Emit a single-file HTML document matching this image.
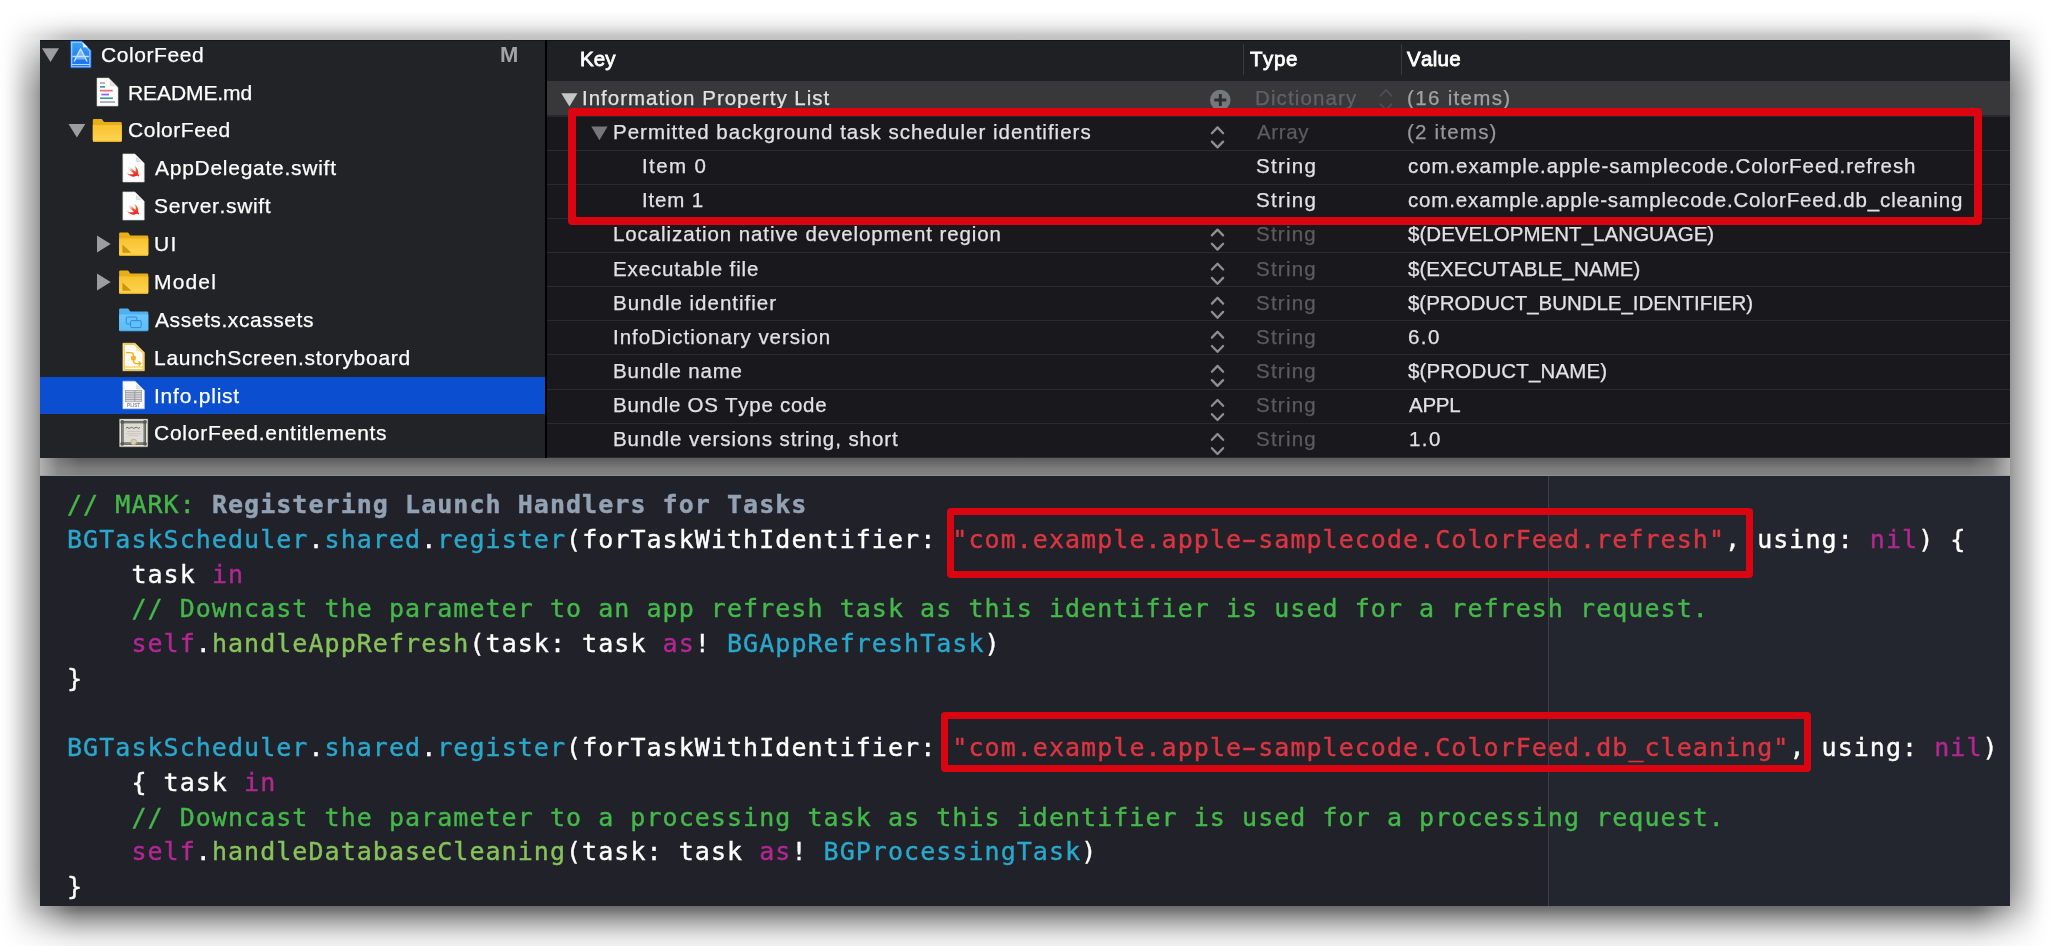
<!DOCTYPE html>
<html><head><meta charset="utf-8"><title>ColorFeed Info.plist</title>
<style>
html,body{margin:0;padding:0;background:#fff;}
body{width:2050px;height:946px;position:relative;overflow:hidden;font-family:"Liberation Sans",sans-serif;}
.abs,.t,.c{position:absolute;}
.t,.c{will-change:transform;}
.t{height:30px;line-height:30px;white-space:pre;font-kerning:none;-webkit-text-stroke:0.25px currentColor;}
.c{font-family:"DejaVu Sans Mono","Liberation Mono",monospace;font-size:25px;letter-spacing:1.045px;line-height:34px;height:34px;white-space:pre;color:#fff;left:66.8px;-webkit-text-stroke:0.4px currentColor;}
.hy{display:inline-block;transform:scaleX(1.75);}
.cm{color:#45b84a}.st{color:#dc3540}.kw{color:#b22792}.cl{color:#2aa8cc}.fn{color:#86c35a}.mk{color:#93a2b3;font-weight:bold}
.ln{position:absolute;left:547px;width:1463px;height:1px;background:#2b2b2f;}
.red{position:absolute;border:7.5px solid #db0411;border-radius:4px;box-sizing:border-box;}
</style></head><body>
<div class="abs" style="left:0;top:0;width:2050px;height:946px;background:linear-gradient(to right,rgba(0,0,0,0.004) 0px,rgba(0,0,0,0.016) 5px,rgba(0,0,0,0.051) 10px,rgba(0,0,0,0.098) 15px,rgba(0,0,0,0.161) 20px,rgba(0,0,0,0.224) 25px,rgba(0,0,0,0.278) 30px,rgba(0,0,0,0.341) 35px,rgba(0,0,0,0.410) 40px,rgba(0,0,0,0.479) 45px,rgba(0,0,0,0.542) 50px,rgba(0,0,0,0.596) 55px,rgba(0,0,0,0.659) 60px,rgba(0,0,0,0.722) 65px,rgba(0,0,0,0.769) 70px,rgba(0,0,0,0.804) 75px,rgba(0,0,0,0.820) 80px,rgba(0,0,0,0.820) 1970px,rgba(0,0,0,0.804) 1975px,rgba(0,0,0,0.769) 1980px,rgba(0,0,0,0.722) 1985px,rgba(0,0,0,0.659) 1990px,rgba(0,0,0,0.596) 1995px,rgba(0,0,0,0.542) 2000px,rgba(0,0,0,0.479) 2005px,rgba(0,0,0,0.410) 2010px,rgba(0,0,0,0.341) 2015px,rgba(0,0,0,0.278) 2020px,rgba(0,0,0,0.224) 2025px,rgba(0,0,0,0.161) 2030px,rgba(0,0,0,0.098) 2035px,rgba(0,0,0,0.051) 2040px,rgba(0,0,0,0.016) 2045px,rgba(0,0,0,0.004) 2050px);"></div>
<div class="abs" style="left:0;top:0;width:2050px;height:946px;background:linear-gradient(to bottom,rgba(255,255,255,1.000) 10px,rgba(255,255,255,0.980) 15px,rgba(255,255,255,0.952) 20px,rgba(255,255,255,0.909) 25px,rgba(255,255,255,0.833) 30px,rgba(255,255,255,0.737) 35px,rgba(255,255,255,0.700) 40px,rgba(255,255,255,0.500) 52px,rgba(255,255,255,0.300) 64px,rgba(255,255,255,0.170) 74px,rgba(255,255,255,0.070) 84px,rgba(255,255,255,0.000) 94px,rgba(255,255,255,0.000) 866px,rgba(255,255,255,0.020) 876px,rgba(255,255,255,0.065) 886px,rgba(255,255,255,0.095) 891px,rgba(255,255,255,0.149) 896px,rgba(255,255,255,0.224) 901px,rgba(255,255,255,0.288) 906px,rgba(255,255,255,0.373) 911px,rgba(255,255,255,0.493) 916px,rgba(255,255,255,0.599) 921px,rgba(255,255,255,0.694) 926px,rgba(255,255,255,0.776) 931px,rgba(255,255,255,0.851) 936px,rgba(255,255,255,0.905) 941px,rgba(255,255,255,0.935) 946px);"></div>
<div class="abs" style="left:40px;top:40px;width:1970px;height:866px;background:#777;"></div>
<div class="abs" style="left:40px;top:458px;width:1970px;height:18px;background:linear-gradient(#5c5c5c,#7c7c7c 60%,#828284);"></div>
<div class="abs" style="left:40px;top:458px;width:40px;height:18px;background:linear-gradient(to right,rgba(178,178,178,1),rgba(150,150,150,0.5) 45%,rgba(128,128,128,0));"></div>
<div class="abs" style="left:1970px;top:458px;width:40px;height:18px;background:linear-gradient(to left,rgba(178,178,178,1),rgba(150,150,150,0.5) 45%,rgba(128,128,128,0));"></div>
<div class="abs" style="left:40px;top:475px;width:1970px;height:1px;background:rgba(150,150,155,0.6);"></div>
<div class="abs" style="left:40px;top:40px;width:506px;height:418px;background:#222326;"></div>
<div class="abs" style="left:546px;top:40px;width:1464px;height:418px;background:#19191d;"></div>
<div class="abs" style="left:545px;top:40px;width:2.1px;height:418px;background:#000;"></div>
<div class="abs" style="left:547px;top:40px;width:1463px;height:41px;background:#1f2024;"></div>
<div class="abs" style="left:547px;top:81px;width:1463px;height:34.4px;background:#38383b;"></div>
<div class="abs" style="left:547px;top:115.4px;width:1463px;height:1.4px;background:#29292c;"></div>
<div class="abs" style="left:40px;top:476px;width:1970px;height:430px;background:#21212a;"></div>
<div class="abs" style="left:1548px;top:476px;width:461px;height:430px;background:#24262f;border-left:1px solid #3b3d49;"></div>
<div class="abs" style="left:40px;top:40px;width:1970px;height:1px;background:rgba(0,0,0,0.35);"></div>
<div class="abs" style="left:40px;top:377px;width:505px;height:36.7px;background:#0b4fd0;"></div>
<div class="t" style="left:100.93px;top:39.72px;font-size:21px;color:#fff;letter-spacing:0.572px;">ColorFeed</div>
<div class="t" style="left:128.18px;top:77.59px;font-size:21px;color:#fff;letter-spacing:-0.084px;">README.md</div>
<div class="t" style="left:127.73px;top:115.46px;font-size:21px;color:#fff;letter-spacing:0.522px;">ColorFeed</div>
<div class="t" style="left:154.86px;top:153.33px;font-size:21px;color:#fff;letter-spacing:0.733px;">AppDelegate.swift</div>
<div class="t" style="left:154.45px;top:191.20px;font-size:21px;color:#fff;letter-spacing:0.620px;">Server.swift</div>
<div class="t" style="left:153.78px;top:229.07px;font-size:21px;color:#fff;letter-spacing:1.358px;">UI</div>
<div class="t" style="left:153.68px;top:266.94px;font-size:21px;color:#fff;letter-spacing:1.158px;">Model</div>
<div class="t" style="left:154.86px;top:304.81px;font-size:21px;color:#fff;letter-spacing:0.568px;">Assets.xcassets</div>
<div class="t" style="left:154.08px;top:342.68px;font-size:21px;color:#fff;letter-spacing:0.713px;">LaunchScreen.storyboard</div>
<div class="t" style="left:153.96px;top:380.55px;font-size:21px;color:#fff;letter-spacing:0.776px;">Info.plist</div>
<div class="t" style="left:153.53px;top:418.42px;font-size:21px;color:#fff;letter-spacing:0.739px;">ColorFeed.entitlements</div>
<div class="t" style="left:500.43px;top:39.68px;font-size:22px;color:#a3a3a7;font-weight:bold;-webkit-text-stroke:0;">M</div>
<div class="t" style="left:580.02px;top:43.50px;font-size:20.5px;color:#fff;letter-spacing:0.099px;-webkit-text-stroke:0.8px #fff;">Key</div>
<div class="t" style="left:1249.54px;top:43.50px;font-size:20.5px;color:#fff;letter-spacing:0.599px;-webkit-text-stroke:0.8px #fff;">Type</div>
<div class="t" style="left:1406.61px;top:43.50px;font-size:20.5px;color:#fff;letter-spacing:0.317px;-webkit-text-stroke:0.8px #fff;">Value</div>
<div class="abs" style="left:1243.2px;top:44px;width:1px;height:31px;background:#3a3a3e;"></div>
<div class="abs" style="left:1400.7px;top:44px;width:1px;height:31px;background:#3a3a3e;"></div>
<div class="ln" style="top:150.0px"></div>
<div class="ln" style="top:184.1px"></div>
<div class="ln" style="top:218.1px"></div>
<div class="ln" style="top:252.2px"></div>
<div class="ln" style="top:286.3px"></div>
<div class="ln" style="top:320.4px"></div>
<div class="ln" style="top:354.4px"></div>
<div class="ln" style="top:388.5px"></div>
<div class="ln" style="top:422.6px"></div>
<div class="ln" style="top:456.6px"></div>
<div class="t" style="left:582.11px;top:83.20px;font-size:20.5px;color:#e2e2e4;letter-spacing:0.997px;">Information Property List</div>
<div class="t" style="left:1255.22px;top:83.20px;font-size:20.5px;color:#626266;letter-spacing:1.120px;">Dictionary</div>
<div class="t" style="left:1407.33px;top:83.20px;font-size:20.5px;color:#a2a2a5;letter-spacing:1.335px;">(16 items)</div>
<div class="t" style="left:612.72px;top:117.27px;font-size:20.5px;color:#e2e2e4;letter-spacing:0.995px;">Permitted background task scheduler identifiers</div>
<div class="t" style="left:1256.86px;top:117.27px;font-size:20.5px;color:#5c5c60;letter-spacing:0.651px;">Array</div>
<div class="t" style="left:1407.33px;top:117.27px;font-size:20.5px;color:#97979b;letter-spacing:1.214px;">(2 items)</div>
<div class="t" style="left:642.41px;top:151.34px;font-size:20.5px;color:#e2e2e4;letter-spacing:1.400px;">Item 0</div>
<div class="t" style="left:1255.97px;top:151.34px;font-size:20.5px;color:#e2e2e4;letter-spacing:1.280px;">String</div>
<div class="t" style="left:1407.73px;top:151.34px;font-size:20.5px;color:#e2e2e4;letter-spacing:0.921px;">com.example.apple-samplecode.ColorFeed.refresh</div>
<div class="t" style="left:642.41px;top:185.41px;font-size:20.5px;color:#e2e2e4;letter-spacing:0.825px;">Item 1</div>
<div class="t" style="left:1255.97px;top:185.41px;font-size:20.5px;color:#e2e2e4;letter-spacing:1.280px;">String</div>
<div class="t" style="left:1407.73px;top:185.41px;font-size:20.5px;color:#e2e2e4;letter-spacing:0.849px;">com.example.apple-samplecode.ColorFeed.db_cleaning</div>
<div class="t" style="left:612.72px;top:219.48px;font-size:20.5px;color:#e2e2e4;letter-spacing:0.905px;">Localization native development region</div>
<div class="t" style="left:1255.97px;top:219.48px;font-size:20.5px;color:#5c5c60;letter-spacing:1.240px;">String</div>
<div class="t" style="left:1408.38px;top:219.48px;font-size:20.5px;color:#e2e2e4;letter-spacing:0.041px;">$(DEVELOPMENT_LANGUAGE)</div>
<div class="t" style="left:612.72px;top:253.55px;font-size:20.5px;color:#e2e2e4;letter-spacing:0.862px;">Executable file</div>
<div class="t" style="left:1255.97px;top:253.55px;font-size:20.5px;color:#5c5c60;letter-spacing:1.240px;">String</div>
<div class="t" style="left:1408.38px;top:253.55px;font-size:20.5px;color:#e2e2e4;letter-spacing:0.067px;">$(EXECUTABLE_NAME)</div>
<div class="t" style="left:612.72px;top:287.62px;font-size:20.5px;color:#e2e2e4;letter-spacing:1.001px;">Bundle identifier</div>
<div class="t" style="left:1255.97px;top:287.62px;font-size:20.5px;color:#5c5c60;letter-spacing:1.240px;">String</div>
<div class="t" style="left:1408.38px;top:287.62px;font-size:20.5px;color:#e2e2e4;letter-spacing:-0.044px;">$(PRODUCT_BUNDLE_IDENTIFIER)</div>
<div class="t" style="left:612.51px;top:321.69px;font-size:20.5px;color:#e2e2e4;letter-spacing:0.958px;">InfoDictionary version</div>
<div class="t" style="left:1255.97px;top:321.69px;font-size:20.5px;color:#5c5c60;letter-spacing:1.240px;">String</div>
<div class="t" style="left:1407.56px;top:321.69px;font-size:20.5px;color:#e2e2e4;letter-spacing:1.400px;">6.0</div>
<div class="t" style="left:612.72px;top:355.76px;font-size:20.5px;color:#e2e2e4;letter-spacing:0.818px;">Bundle name</div>
<div class="t" style="left:1255.97px;top:355.76px;font-size:20.5px;color:#5c5c60;letter-spacing:1.240px;">String</div>
<div class="t" style="left:1408.38px;top:355.76px;font-size:20.5px;color:#e2e2e4;letter-spacing:0.154px;">$(PRODUCT_NAME)</div>
<div class="t" style="left:612.72px;top:389.83px;font-size:20.5px;color:#e2e2e4;letter-spacing:0.724px;">Bundle OS Type code</div>
<div class="t" style="left:1255.97px;top:389.83px;font-size:20.5px;color:#5c5c60;letter-spacing:1.240px;">String</div>
<div class="t" style="left:1408.56px;top:389.83px;font-size:20.5px;color:#e2e2e4;letter-spacing:-0.267px;">APPL</div>
<div class="t" style="left:612.72px;top:423.90px;font-size:20.5px;color:#e2e2e4;letter-spacing:0.931px;">Bundle versions string, short</div>
<div class="t" style="left:1255.97px;top:423.90px;font-size:20.5px;color:#5c5c60;letter-spacing:1.240px;">String</div>
<div class="t" style="left:1409.04px;top:423.90px;font-size:20.5px;color:#e2e2e4;letter-spacing:1.400px;">1.0</div>
<div class="c" style="top:488.3px"><span class="cm">// MARK: </span><span class="mk">Registering Launch Handlers for Tasks</span></div>
<div class="c" style="top:523.0px"><span class="cl">BGTaskScheduler</span>.<span class="cl">shared</span>.<span class="cl">register</span>(forTaskWithIdentifier: <span class="st">"com.example.apple<span class="hy">-</span>samplecode.ColorFeed.refresh"</span>, using: <span class="kw">nil</span>) {</div>
<div class="c" style="top:557.7px">    task <span class="kw">in</span></div>
<div class="c" style="top:592.4px">    <span class="cm">// Downcast the parameter to an app refresh task as this identifier is used for a refresh request.</span></div>
<div class="c" style="top:627.1px">    <span class="kw">self</span>.<span class="fn">handleAppRefresh</span>(task: task <span class="kw">as</span>! <span class="cl">BGAppRefreshTask</span>)</div>
<div class="c" style="top:661.8px">}</div>
<div class="c" style="top:731.2px"><span class="cl">BGTaskScheduler</span>.<span class="cl">shared</span>.<span class="cl">register</span>(forTaskWithIdentifier: <span class="st">"com.example.apple<span class="hy">-</span>samplecode.ColorFeed.db_cleaning"</span>, using: <span class="kw">nil</span>)</div>
<div class="c" style="top:765.9px">    { task <span class="kw">in</span></div>
<div class="c" style="top:800.6px">    <span class="cm">// Downcast the parameter to a processing task as this identifier is used for a processing request.</span></div>
<div class="c" style="top:835.3px">    <span class="kw">self</span>.<span class="fn">handleDatabaseCleaning</span>(task: task <span class="kw">as</span>! <span class="cl">BGProcessingTask</span>)</div>
<div class="c" style="top:870.0px">}</div>
<svg class="abs" style="left:0;top:0" width="2050" height="946" viewBox="0 0 2050 946"><defs><linearGradient id="gx" x1="0" y1="0" x2="0" y2="1"><stop offset="0" stop-color="#3fa6f2"/><stop offset="1" stop-color="#1768ee"/></linearGradient><linearGradient id="gs" x1="0.2" y1="0" x2="0.6" y2="1"><stop offset="0" stop-color="#f8b070"/><stop offset="0.45" stop-color="#f4603a"/><stop offset="1" stop-color="#ec1c24"/></linearGradient></defs><polygon points="42.0,48.2 59.0,48.2 50.5,62.0" fill="#9d9da1"/><polygon points="68.5,124.0 85.3,124.0 76.9,137.6" fill="#9d9da1"/><polygon points="97.0,235.6 97.0,252.5 110.7,244.0" fill="#9d9da1"/><polygon points="97.0,273.6 97.0,290.5 110.7,282.0" fill="#9d9da1"/><polygon points="561.3,93.2 577.5,93.2 569.4,106.4" fill="#c6c6c8"/><polygon points="591.3,126.6 607.6,126.6 599.4,140.2" fill="#77777a"/><path d="M70.4,40.9 H81.9 L91.2,50.4 V68 H70.4 Z" fill="url(#gx)" stroke="#0c46bc" stroke-width="0.7" stroke-linejoin="round"/><path d="M71.7,42.2 H81.4 L89.9,50.9 V66.7 H71.7 Z" fill="none" stroke="#a9dcff" stroke-width="1.1" opacity="0.9"/><path d="M83.2,43 V47.1 H87.4 Z" fill="#f4faff" stroke="#d6ecff" stroke-width="0.6"/><path d="M72,64.5 H89.8" stroke="#b4dcff" stroke-width="1.1"/><path d="M80.6,49.6 L75.6,59.4 H85.6 Z" fill="#d8efff" opacity="0.45"/><path d="M80.6,49 L74.4,61 M80.6,49 L86.9,61 M73,56.4 H88.2" fill="none" stroke="#cdeaff" stroke-width="1.5" stroke-linecap="round" opacity="0.92"/><path d="M97.0,78.1 H108.7 L118.0,87.4 V106.0 H97.0 Z" fill="#fdfdfd" stroke="#d4d4d6" stroke-width="0.6" stroke-linejoin="round"/><path d="M110.3,81.6 V85.8 H114.5 Z" fill="#e4e4e6" stroke="#c4c4c8" stroke-width="0.5"/><rect x="100.0" y="82.2" width="5.0" height="1.7" fill="#a9a9ad"/><rect x="100.0" y="86.0" width="5.0" height="1.7" fill="#3f9a9a"/><rect x="100.0" y="89.8" width="12.7" height="1.7" fill="#e2727a"/><rect x="101.3" y="93.7" width="7.7" height="1.7" fill="#9b5df0"/><rect x="100.0" y="97.4" width="12.9" height="1.7" fill="#3f9a9a"/><rect x="100.0" y="101.2" width="15.0" height="1.7" fill="#a9a9ad"/><path d="M92.8,120.2 Q92.8,119.0 94.0,119.0 H101.8 L104.0,122.0 H120.6 Q121.8,122.0 121.8,123.2 V140.8 Q121.8,142.0 120.6,142.0 H94.0 Q92.8,142.0 92.8,140.8 Z" fill="#e6ae1c"/><defs><linearGradient id="gf1" x1="0" y1="0" x2="0" y2="1"><stop offset="0" stop-color="#f9c22e"/><stop offset="1" stop-color="#fcd452"/></linearGradient></defs><path d="M92.8,125.0 H121.8 V140.0 Q121.8,141.2 120.6,141.2 H94.0 Q92.8,141.2 92.8,140.0 Z" fill="url(#gf1)"/><rect x="93.4" y="140.8" width="27.8" height="1" fill="#e0a81e"/><path d="M119.1,233.8 Q119.1,232.6 120.3,232.6 H128.1 L130.3,235.6 H147.1 Q148.3,235.6 148.3,236.8 V254.8 Q148.3,256.0 147.1,256.0 H120.3 Q119.1,256.0 119.1,254.8 Z" fill="#e6ae1c"/><defs><linearGradient id="gf2" x1="0" y1="0" x2="0" y2="1"><stop offset="0" stop-color="#f9c22e"/><stop offset="1" stop-color="#fcd452"/></linearGradient></defs><path d="M119.1,238.6 H148.3 V254.0 Q148.3,255.2 147.1,255.2 H120.3 Q119.1,255.2 119.1,254.0 Z" fill="url(#gf2)"/><rect x="119.7" y="254.8" width="28.0" height="1" fill="#e0a81e"/><polygon points="122.4,244.6 122.4,252.8 131.4,252.8" fill="#cf9510"/><path d="M119.1,271.8 Q119.1,270.6 120.3,270.6 H128.1 L130.3,273.6 H147.1 Q148.3,273.6 148.3,274.8 V292.8 Q148.3,294.0 147.1,294.0 H120.3 Q119.1,294.0 119.1,292.8 Z" fill="#e6ae1c"/><defs><linearGradient id="gf3" x1="0" y1="0" x2="0" y2="1"><stop offset="0" stop-color="#f9c22e"/><stop offset="1" stop-color="#fcd452"/></linearGradient></defs><path d="M119.1,276.6 H148.3 V292.0 Q148.3,293.2 147.1,293.2 H120.3 Q119.1,293.2 119.1,292.0 Z" fill="url(#gf3)"/><rect x="119.7" y="292.8" width="28.0" height="1" fill="#e0a81e"/><polygon points="122.4,282.6 122.4,290.8 131.4,290.8" fill="#cf9510"/><path d="M119.1,309.7 Q119.1,308.5 120.3,308.5 H128.1 L130.3,311.5 H147.1 Q148.3,311.5 148.3,312.7 V330.0 Q148.3,331.2 147.1,331.2 H120.3 Q119.1,331.2 119.1,330.0 Z" fill="#4fb0f2"/><defs><linearGradient id="gf4" x1="0" y1="0" x2="0" y2="1"><stop offset="0" stop-color="#6cc6fb"/><stop offset="1" stop-color="#5fbcf8"/></linearGradient></defs><path d="M119.1,314.5 H148.3 V329.2 Q148.3,330.4 147.1,330.4 H120.3 Q119.1,330.4 119.1,329.2 Z" fill="url(#gf4)"/><rect x="119.7" y="330.0" width="28.0" height="1" fill="#49a8ee"/><rect x="126.2" y="317" width="10.6" height="7" rx="1" fill="none" stroke="#2c8be0" stroke-width="1"/><rect x="130.6" y="320.6" width="10.6" height="7" rx="1" fill="#62bff9" stroke="#2c8be0" stroke-width="1"/><path d="M122.9,153.9 H134.9 L144.2,163.2 V182.0 H122.9 Z" fill="#fdfdfd" stroke="#d4d4d6" stroke-width="0.6" stroke-linejoin="round"/><path d="M136.5,157.4 V161.6 H140.7 Z" fill="#e4e4e6" stroke="#c4c4c8" stroke-width="0.5"/><path transform="translate(125.20,163.50) scale(0.675)" d="M13.543 3.41c4.114 2.47 6.545 7.162 5.549 11.131-.024.093-.05.181-.076.272l.002.001c2.062 2.538 1.5 5.258 1.236 4.745-1.072-2.086-3.066-1.568-4.088-1.043a6.803 6.803 0 0 1-.281.158l-.02.012-.002.002c-2.115 1.123-4.957 1.205-7.812-.022a12.568 12.568 0 0 1-5.64-4.838c.649.48 1.35.902 2.097 1.252 3.019 1.414 6.051 1.311 8.197-.002C9.651 12.73 7.101 9.67 5.146 7.191a10.628 10.628 0 0 1-1.005-1.384c2.34 2.142 6.038 4.83 7.365 5.576C8.69 8.408 6.208 4.743 6.324 4.86c4.436 4.47 8.528 6.996 8.528 6.996.154.085.27.154.36.213.085-.215.16-.437.224-.668.708-2.588-.09-5.548-1.893-7.992z" fill="url(#gs)"/><path d="M122.9,191.9 H134.9 L144.2,201.2 V220.0 H122.9 Z" fill="#fdfdfd" stroke="#d4d4d6" stroke-width="0.6" stroke-linejoin="round"/><path d="M136.5,195.4 V199.6 H140.7 Z" fill="#e4e4e6" stroke="#c4c4c8" stroke-width="0.5"/><path transform="translate(125.20,201.50) scale(0.675)" d="M13.543 3.41c4.114 2.47 6.545 7.162 5.549 11.131-.024.093-.05.181-.076.272l.002.001c2.062 2.538 1.5 5.258 1.236 4.745-1.072-2.086-3.066-1.568-4.088-1.043a6.803 6.803 0 0 1-.281.158l-.02.012-.002.002c-2.115 1.123-4.957 1.205-7.812-.022a12.568 12.568 0 0 1-5.64-4.838c.649.48 1.35.902 2.097 1.252 3.019 1.414 6.051 1.311 8.197-.002C9.651 12.73 7.101 9.67 5.146 7.191a10.628 10.628 0 0 1-1.005-1.384c2.34 2.142 6.038 4.83 7.365 5.576C8.69 8.408 6.208 4.743 6.324 4.86c4.436 4.47 8.528 6.996 8.528 6.996.154.085.27.154.36.213.085-.215.16-.437.224-.668.708-2.588-.09-5.548-1.893-7.992z" fill="url(#gs)"/><path d="M122.9,343.2 H135.1 L144.4,352.5 V370.8 H122.9 Z" fill="#fffdf6" stroke="#f2c64c" stroke-width="0.6" stroke-linejoin="round"/><path d="M136.7,346.7 V350.9 H140.9 Z" fill="#fdf3d2" stroke="#f2cf6e" stroke-width="0.5"/><path d="M124.2,344.4 H134.6 L143.2,353 V369.6 H124.2 Z" fill="none" stroke="#f4c84a" stroke-width="1.3"/><path d="M124.8,367 H143" stroke="#f4c84a" stroke-width="1.1"/><path d="M126,352.6 H130.6 Q133.4,352.6 133.4,355.4 V360.6 Q133.4,363.6 136.2,363.6 H140.6 M138.6,361.4 L140.8,363.6 L138.6,365.8" fill="none" stroke="#eeb21c" stroke-width="1.3"/><circle cx="133.4" cy="358" r="2.6" fill="#f2b41c"/><path d="M122.9,381.2 H135.1 L144.4,390.5 V408.8 H122.9 Z" fill="#fdfdfe" stroke="#c4cfe6" stroke-width="0.6" stroke-linejoin="round"/><path d="M136.7,384.7 V388.9 H140.9 Z" fill="#e6e8ee" stroke="#c0c6d4" stroke-width="0.5"/><rect x="125.3" y="390.4" width="16.4" height="11.4" fill="#d8d8da" stroke="#9a9a9e" stroke-width="0.7"/><path d="M125.3,392.6 H141.7" stroke="#8e8e92" stroke-width="0.7"/><path d="M125.3,394.9 H141.7" stroke="#8e8e92" stroke-width="0.7"/><path d="M125.3,397.2 H141.7" stroke="#8e8e92" stroke-width="0.7"/><path d="M125.3,399.5 H141.7" stroke="#8e8e92" stroke-width="0.7"/><path d="M134.8,390.4 V401.8" stroke="#8e8e92" stroke-width="0.7"/><text x="133.6" y="407.2" font-family="Liberation Sans, sans-serif" font-size="4.6" fill="#8a8a8e" text-anchor="middle" font-weight="bold">PLIST</text><rect x="119" y="418.6" width="29.2" height="28.6" rx="0.6" fill="#e9e8de" stroke="#161616" stroke-width="0.8"/><rect x="122.4" y="422.1" width="22.4" height="21.5" fill="#dedcd5" stroke="#5e5e5a" stroke-width="2.5"/><rect x="122.4" y="422.1" width="22.4" height="21.5" fill="none" stroke="#a3a39d" stroke-width="0.5"/><circle cx="122.2" cy="421.9" r="1.9" fill="#585854"/><circle cx="145.0" cy="421.9" r="1.9" fill="#585854"/><circle cx="122.2" cy="443.8" r="1.9" fill="#585854"/><circle cx="145.0" cy="443.8" r="1.9" fill="#585854"/><path d="M126.4,428.4 q0.6,-2.4 1.6,-0.6 q1,1.2 2.2,0 t2.4,0 t2.4,0 t2.4,0 t2.6,-0.4" fill="none" stroke="#555552" stroke-width="0.85"/><path d="M127.2,431.5 H140.2 M126.4,433.6 H140.8 M128.4,435.6 H138.2" stroke="#b9b8b0" stroke-width="0.6"/><circle cx="133.7" cy="441.9" r="2.8" fill="#d6d1aa" stroke="#a9a27c" stroke-width="0.6"/><circle cx="1220.3" cy="100" r="10.3" fill="#77787b"/><path d="M1214.3,100 H1226.3 M1220.3,94 V106" stroke="#2e2e30" stroke-width="3"/><path d="M1380.4,95.8 L1386.0,90.0 L1391.6,95.8 M1380.4,104.2 L1386.0,110.0 L1391.6,104.2" fill="none" stroke="#4e4e52" stroke-width="1.8" stroke-linecap="round" stroke-linejoin="round"/><path d="M1211.9,133.2 L1217.5,127.4 L1223.1,133.2 M1211.9,141.6 L1217.5,147.4 L1223.1,141.6" fill="none" stroke="#8f8f93" stroke-width="2.3" stroke-linecap="round" stroke-linejoin="round"/><path d="M1211.9,235.4 L1217.5,229.6 L1223.1,235.4 M1211.9,243.8 L1217.5,249.6 L1223.1,243.8" fill="none" stroke="#8f8f93" stroke-width="2.3" stroke-linecap="round" stroke-linejoin="round"/><path d="M1211.9,269.5 L1217.5,263.7 L1223.1,269.5 M1211.9,277.9 L1217.5,283.7 L1223.1,277.9" fill="none" stroke="#8f8f93" stroke-width="2.3" stroke-linecap="round" stroke-linejoin="round"/><path d="M1211.9,303.6 L1217.5,297.8 L1223.1,303.6 M1211.9,311.9 L1217.5,317.8 L1223.1,311.9" fill="none" stroke="#8f8f93" stroke-width="2.3" stroke-linecap="round" stroke-linejoin="round"/><path d="M1211.9,337.6 L1217.5,331.8 L1223.1,337.6 M1211.9,346.0 L1217.5,351.8 L1223.1,346.0" fill="none" stroke="#8f8f93" stroke-width="2.3" stroke-linecap="round" stroke-linejoin="round"/><path d="M1211.9,371.7 L1217.5,365.9 L1223.1,371.7 M1211.9,380.1 L1217.5,385.9 L1223.1,380.1" fill="none" stroke="#8f8f93" stroke-width="2.3" stroke-linecap="round" stroke-linejoin="round"/><path d="M1211.9,405.8 L1217.5,400.0 L1223.1,405.8 M1211.9,414.2 L1217.5,420.0 L1223.1,414.2" fill="none" stroke="#8f8f93" stroke-width="2.3" stroke-linecap="round" stroke-linejoin="round"/><path d="M1211.9,439.8 L1217.5,434.0 L1223.1,439.8 M1211.9,448.2 L1217.5,454.0 L1223.1,448.2" fill="none" stroke="#8f8f93" stroke-width="2.3" stroke-linecap="round" stroke-linejoin="round"/></svg>
<div class="red" style="left:568.3px;top:107.5px;width:1413.7px;height:117.3px;border-width:8.1px"></div>
<div class="red" style="left:946.9px;top:507.9px;width:806.0px;height:69.8px;border-width:7.5px"></div>
<div class="red" style="left:940.7px;top:712.4px;width:870.4px;height:59.2px;border-width:7.5px"></div>
</body></html>
